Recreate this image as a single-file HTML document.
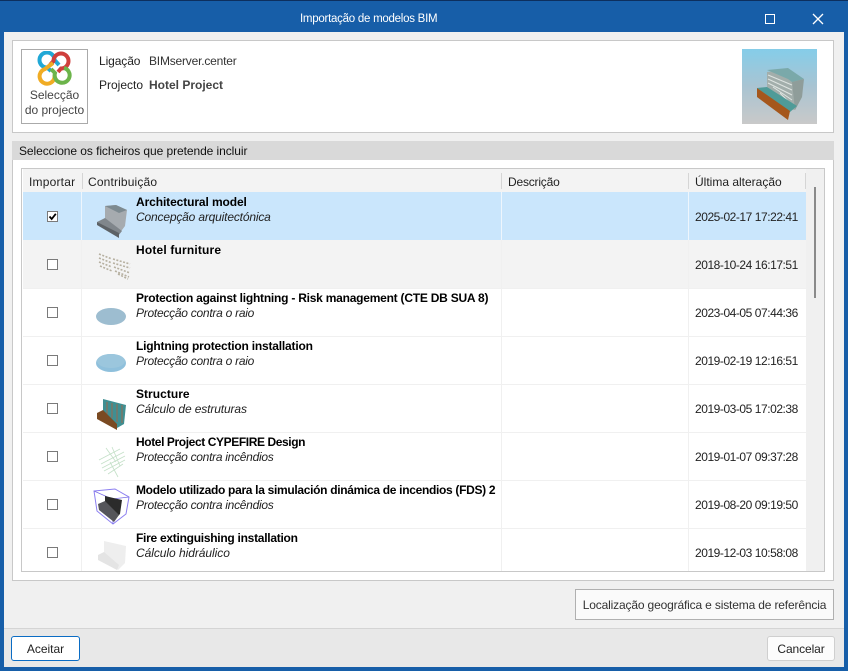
<!DOCTYPE html>
<html><head><meta charset="utf-8"><style>
html,body{margin:0;padding:0;width:848px;height:671px;overflow:hidden;background:#175ea8}
*{box-sizing:border-box}
body{font-family:"Liberation Sans",sans-serif;font-size:12px;color:#111;position:relative}
div,span{position:absolute;white-space:nowrap}
.l{line-height:14px}
.n{font-weight:bold;left:136px;color:#000;letter-spacing:-.3px}
.s{font-style:italic;left:136px;color:#222;letter-spacing:-.17px}
.d{left:695px;color:#222;letter-spacing:-.45px}
.cb{left:47px;width:11px;height:11px;border:1px solid #7a7a7a;background:#fff}
.r{left:23px;width:783px;height:48px;border-bottom:1px solid #f0f0f0}
.v{top:193px;width:1px;height:378px;background:#f0f0f0}
svg{position:absolute}
</style></head><body>
<div style="left:0;top:0;width:848px;height:1px;background:#0d2f5e"></div>
<div class="l" style="left:300px;top:12px;color:#fff;font-size:11.5px;letter-spacing:-.26px">Importação de modelos BIM</div>
<svg style="left:760px;top:10px" width="80" height="18" fill="none" stroke="#fff"><rect x="5.5" y="4.5" width="9" height="9" stroke-width="1"/><path d="M53 4L63 14M63 4L53 14" stroke-width="1.3"/></svg>

<div style="left:4px;top:32px;width:840px;height:635px;background:#f0f0f0"></div>
<div style="left:12px;top:40px;width:822px;height:93px;background:#fff;border:1px solid #c8c8c8"></div>
<div style="left:21px;top:49px;width:67px;height:75px;background:#fff;border:1px solid #aaa"></div>
<svg style="left:37px;top:51px" width="35" height="35" fill="none" stroke-width="4">
<path d="M14 20L10 16.5A7.5 7.5 0 1 1 17.5 9L22 14" stroke="#21a8d6"/>
<path d="M13 14L16.5 10A7.5 7.5 0 1 1 24 17.5L21 21" stroke="#cf3f3c"/>
<path d="M16 12L8 18A7.5 7.5 0 1 0 17.5 24" stroke="#f0ac24"/>
<path d="M14 18L18 22A7.5 7.5 0 1 0 27 17" stroke="#6cb44a"/>
</svg>
<div class="l" style="left:22px;width:65px;top:88px;text-align:center;color:#444">Selecção</div>
<div class="l" style="left:22px;width:65px;top:103px;text-align:center;color:#444">do projecto</div>
<div class="l" style="left:99px;top:54px;color:#222;letter-spacing:-.1px">Ligação</div>
<div class="l" style="left:149px;top:54px;color:#333;letter-spacing:-.2px">BIMserver.center</div>
<div class="l" style="left:99px;top:78px;color:#222">Projecto</div>
<div class="l" style="left:149px;top:78px;color:#444;font-weight:bold">Hotel Project</div>

<div style="left:742px;top:49px;width:75px;height:75px;background:linear-gradient(#85cde9,#a9c4d2 50%,#c9c9c9)"></div>
<svg style="left:742px;top:49px" width="75" height="75">
<path d="M25 23L46 21L61 31L60 48L53 61L46 60L25 38Z" fill="#a2aeab"/>
<path d="M25 21L46 19L62 30L50 33L46 30Z" fill="#7aa9aa"/>
<path d="M50 33L62 30L60 48L53 61Z" fill="#8f9d9a"/>
<path d="M26 26L50 36M26 30L50 41M26 34L50 46M31 38L50 51M38 44L50 56" stroke="#dfe5e2" fill="none"/>
<path d="M15 39L25 38L55 57L48 63Z" fill="#4f9b98"/>
<path d="M15 39L15 48L46 71L48 62Z" fill="#a5571c"/>
</svg>

<div style="left:12px;top:141px;width:822px;height:440px;background:#fff;border:1px solid #c8c8c8"></div>
<div style="left:12px;top:141px;width:822px;height:19px;background:#d9d9d9"></div>
<div class="l" style="left:19px;top:144px;color:#111;letter-spacing:-.07px">Seleccione os ficheiros que pretende incluir</div>

<div style="left:21px;top:168px;width:804px;height:404px;background:#fff;border:1px solid #c8c8c8"></div>
<div style="left:23px;top:169px;width:783px;height:24px;background:#f3f3f3"></div>
<div style="left:82px;top:173px;width:1px;height:16px;background:#d5d5d5"></div>
<div style="left:501px;top:173px;width:1px;height:16px;background:#d5d5d5"></div>
<div style="left:688px;top:173px;width:1px;height:16px;background:#d5d5d5"></div>
<div style="left:805px;top:173px;width:1px;height:16px;background:#d5d5d5"></div>
<div class="l" style="left:29px;top:175px;color:#222;letter-spacing:.2px">Importar</div>
<div class="l" style="left:88px;top:175px;color:#222;letter-spacing:.15px">Contribuição</div>
<div class="l" style="left:508px;top:175px;color:#222;letter-spacing:-.2px">Descrição</div>
<div class="l" style="left:695px;top:175px;color:#222">Última alteração</div>

<div style="left:806px;top:169px;width:18px;height:402px;background:#f0f0f0"></div>
<div style="left:814px;top:187px;width:2px;height:111px;background:#8a8a8a"></div>

<div class="r" style="top:192px;background:#cae6fc;border:0"></div>
<div class="r" style="top:240px;background:#f3f3f3;height:49px"></div>
<div class="r" style="top:289px"></div>
<div class="r" style="top:337px"></div>
<div class="r" style="top:385px"></div>
<div class="r" style="top:433px"></div>
<div class="r" style="top:481px"></div>
<div class="v" style="left:81px"></div>
<div class="v" style="left:501px"></div>
<div class="v" style="left:688px"></div>
<div style="left:81px;top:192px;width:1px;height:48px;background:#eef6fd"></div>
<div style="left:501px;top:192px;width:1px;height:48px;background:#eef6fd"></div>
<div style="left:688px;top:192px;width:1px;height:48px;background:#eef6fd"></div>

<div class="cb" style="top:211px"></div>
<svg style="left:47px;top:211px" width="11" height="11"><path d="M2.5 5.5L4.7 8L8.8 2.8" fill="none" stroke="#000" stroke-width="1.8"/></svg>
<div class="cb" style="top:259px"></div>
<div class="cb" style="top:307px"></div>
<div class="cb" style="top:355px"></div>
<div class="cb" style="top:403px"></div>
<div class="cb" style="top:451px"></div>
<div class="cb" style="top:499px"></div>
<div class="cb" style="top:547px"></div>

<div class="l n" style="top:195px;letter-spacing:-.1px">Architectural model</div>
<div class="l s" style="top:210px">Concepção arquitectónica</div>
<div class="l d" style="top:210px">2025-02-17 17:22:41</div>
<div class="l n" style="top:243px;letter-spacing:.17px">Hotel furniture</div>
<div class="l d" style="top:258px">2018-10-24 16:17:51</div>
<div class="l n" style="top:291px;letter-spacing:-.23px">Protection against lightning - Risk management (CTE DB SUA 8)</div>
<div class="l s" style="top:306px;letter-spacing:-.26px">Protecção contra o raio</div>
<div class="l d" style="top:306px">2023-04-05 07:44:36</div>
<div class="l n" style="top:339px;letter-spacing:-.2px">Lightning protection installation</div>
<div class="l s" style="top:354px;letter-spacing:-.26px">Protecção contra o raio</div>
<div class="l d" style="top:354px">2019-02-19 12:16:51</div>
<div class="l n" style="top:387px;letter-spacing:.03px">Structure</div>
<div class="l s" style="top:402px;letter-spacing:-.12px">Cálculo de estruturas</div>
<div class="l d" style="top:402px">2019-03-05 17:02:38</div>
<div class="l n" style="top:435px;letter-spacing:-.4px">Hotel Project CYPEFIRE Design</div>
<div class="l s" style="top:450px;letter-spacing:-.28px">Protecção contra incêndios</div>
<div class="l d" style="top:450px">2019-01-07 09:37:28</div>
<div class="l n" style="top:483px;letter-spacing:-.31px">Modelo utilizado para la simulación dinámica de incendios (FDS) 2</div>
<div class="l s" style="top:498px;letter-spacing:-.28px">Protecção contra incêndios</div>
<div class="l d" style="top:498px">2019-08-20 09:19:50</div>
<div class="l n" style="top:531px;letter-spacing:-.27px">Fire extinguishing installation</div>
<div class="l s" style="top:546px;letter-spacing:-.05px">Cálculo hidráulico</div>
<div class="l d" style="top:546px">2019-12-03 10:58:08</div>

<svg style="left:92px;top:192px" width="45" height="384">
<!-- architectural -->
<path d="M13 14L24 13L35 18L33 34L27 42L13 29Z" fill="#a6abaf"/>
<path d="M24 13L35 18L27 21L13 14Z" fill="#7d8a90"/>
<path d="M5 30L13 26L30 39L26 44Z" fill="#80868b"/>
<path d="M5 30L5 33L27 46L27 41Z" fill="#5d6266"/>
<!-- furniture -->
<g fill="none" stroke="#a29a85" stroke-width="1.6" stroke-dasharray="2 1.5" opacity=".75">
<path d="M7 62L20 67M7 66L20 71M7 70L20 75M8 74L20 79"/>
<path d="M21 67L38 72M21 71L38 76M22 75L38 81M23 79L37 85M26 82L36 87"/>
</g>
<!-- lightning disc -->
<ellipse cx="19" cy="124.5" rx="15" ry="8.5" fill="#9dbdd0"/>
<ellipse cx="19" cy="171" rx="15" ry="9" fill="#8fc0dc"/>
<ellipse cx="19" cy="169" rx="14" ry="7" fill="#9bc6dd"/>
<!-- structure -->
<path d="M11 207L34 213L32 232L25 236L11 222Z" fill="#3f8f92"/>
<path d="M15 210L15 222M20 211L20 226M25 212L25 230M30 213L30 231" stroke="#9a6a50"/>
<path d="M5 221L11 218L25 232L25 238L5 227Z" fill="#7a4a22"/>
<!-- fire design -->
<g fill="none" stroke="#c4e0c8" stroke-width=".8">
<path d="M7 268L28 257M9 272L32 260M10 276L33 264M12 279L33 268M16 282L31 272"/>
<path d="M14 256L24 270M20 255L28 274M18 270L26 285"/>
</g>
<!-- FDS box -->
<path d="M2 299L23 297L37 305L34 322L21 332L5 319Z" fill="none" stroke="#8c7ff0"/>
<path d="M2 299L20 307L37 305M20 307L21 332" fill="none" stroke="#7a6ee6" stroke-width=".8"/>
<path d="M13 304L30 308L28 322L23 327L13 316Z" fill="#2b2b2b"/>
<path d="M6 312L13 309L27 323L22 330L7 318Z" fill="#55555a"/>
<!-- extinguishing -->
<path d="M12 349L34 354L33 371L26 378L12 365Z" fill="#eeeeee"/>
<path d="M6 363L12 360L27 373L25 378L6 368Z" fill="#e4e4e4"/>
</svg>
<div style="left:23px;top:571px;width:801px;height:1px;background:#c8c8c8"></div>

<div style="left:575px;top:589px;width:259px;height:31px;background:#fafafa;border:1px solid #b0b0b0"></div>
<div class="l" style="left:575px;width:259px;top:598px;text-align:center;color:#333;letter-spacing:-.16px">Localização geográfica e sistema de referência</div>
<div style="left:4px;top:628px;width:840px;height:39px;background:#e8e8e8;border-top:1px solid #d4d4d4"></div>
<div style="left:11px;top:636px;width:69px;height:25px;background:#fff;border:1px solid #0a6cc4;border-radius:3px"></div>
<div class="l" style="left:11px;width:69px;top:642px;text-align:center;color:#222">Aceitar</div>
<div style="left:767px;top:636px;width:68px;height:25px;background:#fcfcfc;border:1px solid #cfcfcf;border-radius:3px"></div>
<div class="l" style="left:767px;width:68px;top:642px;text-align:center;color:#222;letter-spacing:-.1px">Cancelar</div>
</body></html>
